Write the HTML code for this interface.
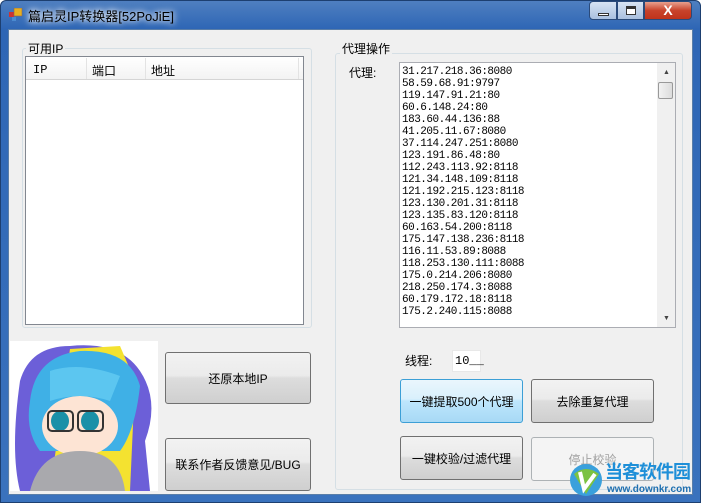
<!DOCTYPE html>
<html><head><meta charset="utf-8"><style>
*{margin:0;padding:0;box-sizing:border-box}
body{width:701px;height:503px;overflow:hidden;background:#fff;font-family:"Liberation Sans","Noto Sans CJK SC",sans-serif;font-size:12px;color:#000;position:relative}
.frame{position:absolute;left:0;top:0;width:701px;height:503px;background:linear-gradient(180deg,#4f7fc0 0,#2e66b5 28px,#3a72bd 100%);border:1px solid #1d3f70;border-radius:6px 6px 0 0}
.title{position:absolute;left:28px;top:6px;font-size:13px;color:#000;text-shadow:0 0 6px #fff,0 0 8px #fff;white-space:nowrap}
.client{position:absolute;left:8px;top:29px;width:685px;height:466px;background:#f0f0f0;border:1px solid #5a7ea8}
.a{position:absolute;white-space:nowrap}
.gb{position:absolute;border:1px solid #d5dfe5;border-radius:3px}
.gl{position:absolute;background:#f0f0f0;padding:0 2px;font-size:12px}
.btn{position:absolute;border:1px solid #707070;border-radius:3px;background:linear-gradient(#f2f2f2 0,#ebebeb 45%,#dddddd 50%,#cfcfcf 100%);display:flex;align-items:center;justify-content:center;font-size:12px;white-space:nowrap}
.mono{font-family:"Liberation Mono","Noto Sans CJK SC",monospace}
.ta{position:absolute;left:399px;top:62px;width:277px;height:266px;background:#fff;border:1px solid #abadb3}
.ta pre{font-family:"Liberation Mono",monospace;font-size:11px;line-height:12px;padding:3px 0 0 2px;letter-spacing:-0.5px}
.wb{position:absolute;top:1px;height:19px;border:1px solid #2a4a7a}
</style></head><body>
<div class="frame"></div>
<svg class="a" style="left:9px;top:8px" width="14" height="14"><rect x="0" y="4" width="5" height="5" fill="#c33"/><rect x="5" y="0" width="8" height="8" fill="#e8b020" stroke="#865" stroke-width=".6"/><rect x="3" y="9" width="4" height="4" fill="#4a8ad0"/></svg>
<div class="title">篇启灵IP转换器[52PoJiE]</div>
<div class="wb" style="left:589px;width:28px;border-radius:4px 0 0 4px;background:linear-gradient(#d7e3f3,#a9c0df)"><div class="a" style="left:8px;top:11px;width:11px;height:3px;background:#fff;border:1px solid #333"></div></div>
<div class="wb" style="left:617px;width:27px;background:linear-gradient(#d7e3f3,#a9c0df)"><div class="a" style="left:8px;top:4px;width:10px;height:9px;border:1px solid #333;border-top-width:3px;background:#fff"></div></div>
<div class="wb" style="left:644px;width:48px;border-radius:0 4px 4px 0;background:linear-gradient(#e8a08e,#c8432b 50%,#c0331b);color:#fff;font-weight:bold;font-size:14px;text-align:center;line-height:17px">X</div>
<div class="client"></div>

<div class="gb" style="left:22px;top:48px;width:290px;height:280px"></div>
<div class="gl" style="left:26px;top:40px">可用IP</div>
<div class="a" style="left:25px;top:56px;width:279px;height:269px;background:#fff;border:1px solid #828790"></div>
<div class="a" style="left:26px;top:57px;width:277px;height:23px;background:linear-gradient(#fff,#f3f3f3);border-bottom:1px solid #d5d5d5"></div>
<div class="a" style="left:86px;top:58px;width:1px;height:21px;background:#e3e3e3"></div>
<div class="a" style="left:145px;top:58px;width:1px;height:21px;background:#e3e3e3"></div>
<div class="a" style="left:298px;top:58px;width:1px;height:21px;background:#e3e3e3"></div>
<div class="a mono" style="left:33px;top:63px">IP</div>
<div class="a" style="left:92px;top:62px">端口</div>
<div class="a" style="left:151px;top:62px">地址</div>

<svg class="a" style="left:10px;top:341px" width="148" height="150">
<rect width="148" height="150" fill="#fff"/>
<path d="M10 40 Q20 5 60 5 Q110 0 130 30 Q150 60 135 100 L140 150 L10 150 Q0 110 10 40Z" fill="#6c5fd8"/>
<path d="M60 8 L110 5 L125 40 L120 150 L40 150 Z" fill="#f4e230"/>
<path d="M20 60 Q25 15 70 10 Q120 8 130 45 Q125 90 110 110 L30 110 Q15 90 20 60Z" fill="#3fb0e6"/>
<ellipse cx="70" cy="85" rx="38" ry="30" fill="#fde4d4"/>
<ellipse cx="50" cy="80" rx="9" ry="10" fill="#1a90a8"/><ellipse cx="80" cy="80" rx="9" ry="10" fill="#1a90a8"/>
<rect x="38" y="70" width="25" height="20" rx="4" fill="none" stroke="#333" stroke-width="2"/><rect x="68" y="70" width="25" height="20" rx="4" fill="none" stroke="#333" stroke-width="2"/>
<path d="M40 30 Q70 20 110 35 L100 60 Q70 50 40 60Z" fill="#5cc6f0"/>
<path d="M20 150 Q30 110 70 110 Q110 110 115 150Z" fill="#a9a9ad"/>
</svg>
<div class="btn" style="left:165px;top:352px;width:146px;height:52px">还原本地IP</div>
<div class="btn" style="left:165px;top:438px;width:146px;height:53px">联系作者反馈意见/BUG</div>

<div class="gb" style="left:335px;top:53px;width:348px;height:437px"></div>
<div class="gl" style="left:340px;top:40px">代理操作</div>
<div class="a" style="left:349px;top:64px">代理:</div>
<div class="ta"><pre>31.217.218.36:8080
58.59.68.91:9797
119.147.91.21:80
60.6.148.24:80
183.60.44.136:88
41.205.11.67:8080
37.114.247.251:8080
123.191.86.48:80
112.243.113.92:8118
121.34.148.109:8118
121.192.215.123:8118
123.130.201.31:8118
123.135.83.120:8118
60.163.54.200:8118
175.147.138.236:8118
116.11.53.89:8088
118.253.130.111:8088
175.0.214.206:8080
218.250.174.3:8088
60.179.172.18:8118
175.2.240.115:8088</pre>
<div class="a" style="left:257px;top:0;width:18px;height:264px;background:#f0f0f0"></div>
<div class="a" style="left:263px;top:6px;font-size:7px;color:#444">▲</div>
<div class="a" style="left:263px;top:252px;font-size:7px;color:#444">▼</div>
<div class="a" style="left:258px;top:19px;width:15px;height:17px;border:1px solid #999;border-radius:2px;background:linear-gradient(90deg,#f2f2f2,#dcdcdc)"></div>
</div>
<div class="a" style="left:405px;top:352px">线程:</div>
<div class="a mono" style="left:452px;top:350px;width:29px;height:22px;background:#fff;border:1px solid #e8e8e8;padding:3px 0 0 2px">10__</div>
<div class="btn" style="left:400px;top:379px;width:123px;height:44px;border-color:#3c9fd6;background:linear-gradient(#eaf6fd,#d9f0fc 45%,#bee6fd 50%,#a7d9f5)">一键提取500个代理</div>
<div class="btn" style="left:531px;top:379px;width:123px;height:44px">去除重复代理</div>
<div class="btn" style="left:400px;top:436px;width:123px;height:44px">一键校验/过滤代理</div>
<div class="btn" style="left:531px;top:437px;width:123px;height:44px;border-color:#adb2b5;background:#f4f4f4;color:#a0a0a0">停止校验</div>

<svg class="a" style="left:568px;top:462px" width="36" height="36"><circle cx="18" cy="18" r="16" fill="#3aa0dc"/><path d="M6 12 Q18 2 31 12 L18 32Z" fill="#7cc242"/><path d="M12 10 L16 27 L27 12" stroke="#fff" stroke-width="4" fill="none"/></svg>
<div class="a" style="left:605px;top:461px;font-size:18px;line-height:22px;font-weight:bold;color:#1e8fd8;letter-spacing:-1px">当客软件园</div>
<div class="a" style="left:607px;top:484px;font-size:10px;line-height:12px;color:#1e6fb0;font-weight:bold">www.downkr.com</div>
</body></html>
